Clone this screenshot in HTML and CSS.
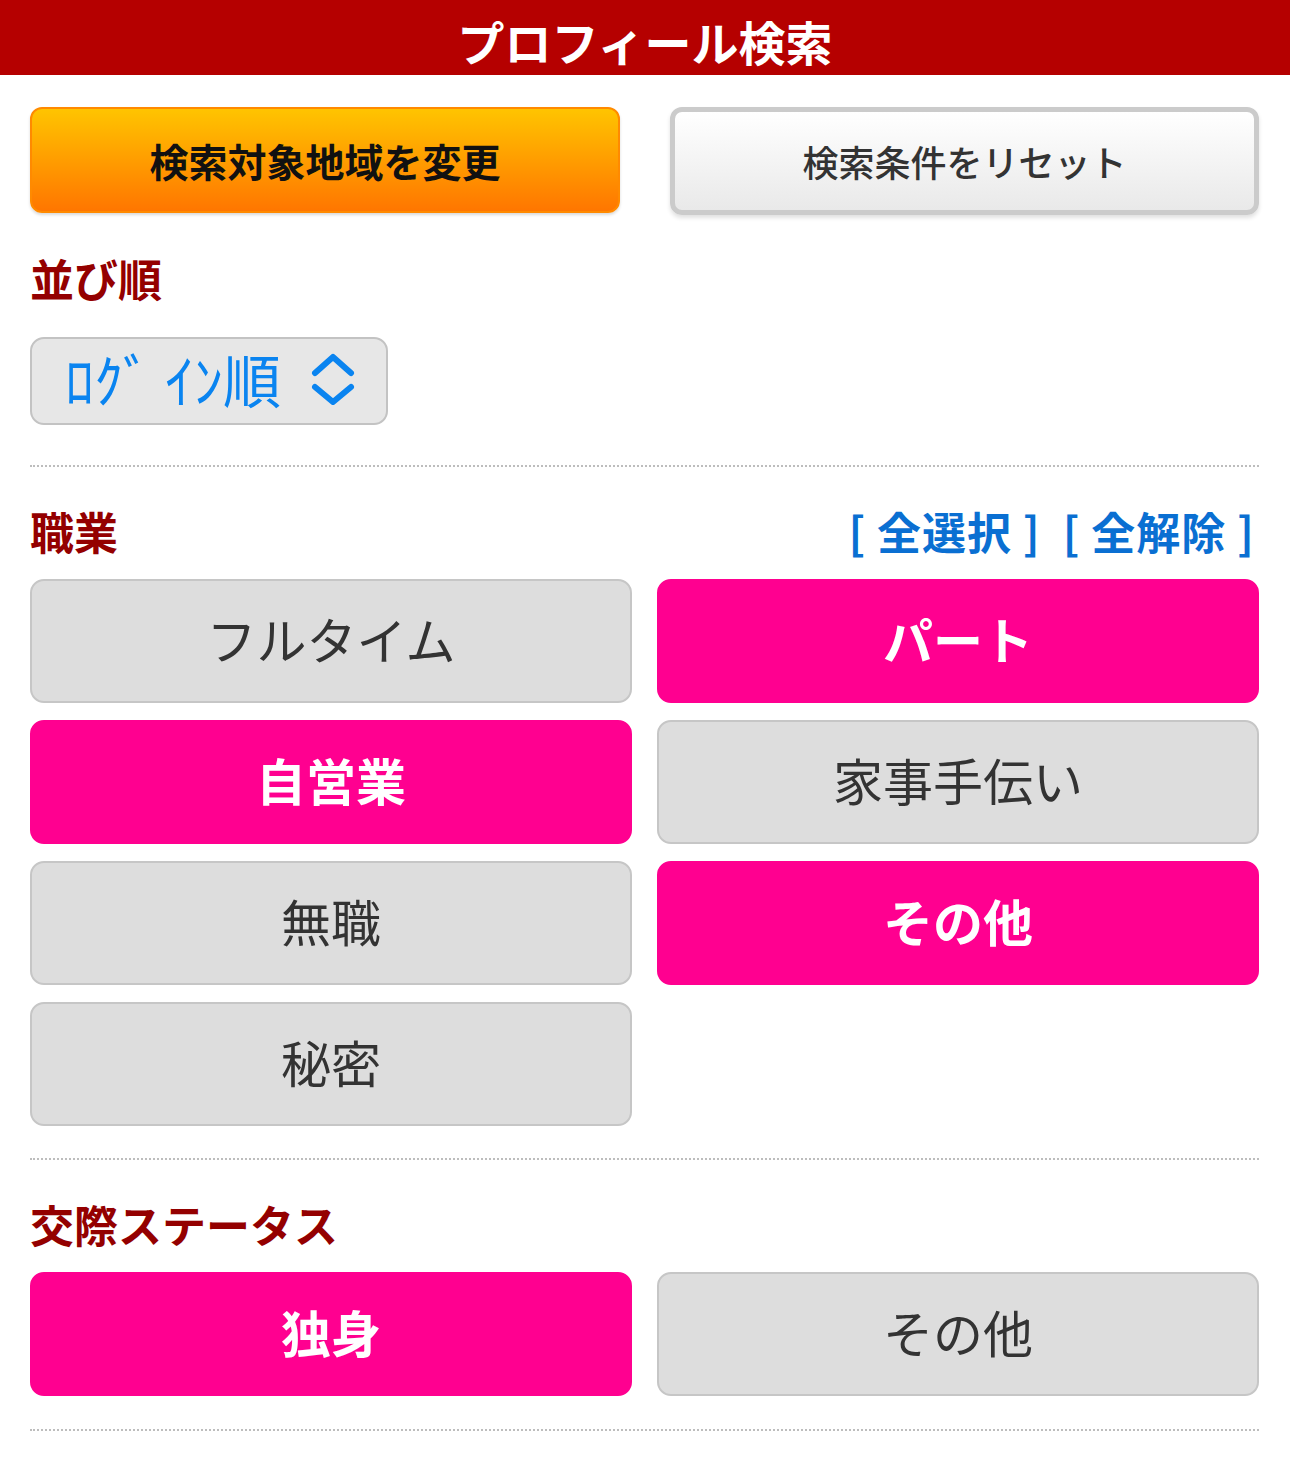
FILE: index.html
```html
<!DOCTYPE html>
<html lang="ja">
<head>
<meta charset="utf-8">
<title>プロフィール検索</title>
<link rel="stylesheet" href="styles.css">
</head>
<body>
<header class="topbar"><h1 class="title">プロフィール検索</h1></header>
<main class="content">
  <div class="actions">
    <button class="btn-area">検索対象地域を変更</button>
    <button class="btn-reset">検索条件をリセット</button>
  </div>

  <section class="section sort">
    <h2 class="heading">並び順</h2>
    <div class="select">
      <span class="select-text">ﾛｸﾞ ｲﾝ順</span>
      <svg class="chevron" viewBox="0 0 44 52" width="44" height="52" aria-hidden="true">
        <polyline points="4,20 22,4 40,20" fill="none" stroke="#0a84f0" stroke-width="6" stroke-linecap="round" stroke-linejoin="round"/>
        <polyline points="4,34 22,49 40,34" fill="none" stroke="#0a84f0" stroke-width="6" stroke-linecap="round" stroke-linejoin="round"/>
      </svg>
    </div>
  </section>

  <div class="divider"></div>

  <section class="section job">
    <div class="heading-row">
      <h2 class="heading">職業</h2>
      <div class="links">
        <a class="link">[&nbsp;全選択&nbsp;]</a>
        <a class="link">[&nbsp;全解除&nbsp;]</a>
      </div>
    </div>
    <div class="options">
      <div class="opt">フルタイム</div>
      <div class="opt on">パート</div>
      <div class="opt on">自営業</div>
      <div class="opt">家事手伝い</div>
      <div class="opt">無職</div>
      <div class="opt on">その他</div>
      <div class="opt">秘密</div>
    </div>
  </section>

  <div class="divider"></div>

  <section class="section status">
    <h2 class="heading">交際ステータス</h2>
    <div class="options">
      <div class="opt on">独身</div>
      <div class="opt">その他</div>
    </div>
  </section>

  <div class="divider"></div>
</main>
</body>
</html>
```

FILE: styles.css
```css
* { box-sizing: border-box; }
html, body { margin: 0; padding: 0; background: #fff; }
body {
  font-family: "Noto Sans CJK JP", "Noto Sans", sans-serif;
  color: #333;
}
.topbar {
  height: 75px;
  background: #b50000;
  display: flex;
  justify-content: center;
  align-items: center;
  padding-top: 5px;
}
.title {
  margin: 0;
  font-size: 47px;
  line-height: 1;
  font-weight: 700;
  color: #fff;
}
.content {
  padding: 0 31px 0 30px;
}
.actions {
  display: grid;
  grid-template-columns: 590px 1fr;
  gap: 50px;
  margin-top: 32px;
  align-items: start;
}
.btn-area, .btn-reset {
  font-family: inherit;
  display: flex;
  align-items: center;
  justify-content: center;
  line-height: 1;
  cursor: pointer;
}
.btn-area {
  height: 106px;
  border: 2px solid #ff8a00;
  border-radius: 12px;
  background: linear-gradient(#ffc400, #ff7600);
  color: #111;
  font-size: 39px;
  font-weight: 700;
  box-shadow: 0 2px 3px rgba(0,0,0,0.15);
}
.btn-reset {
  height: 108px;
  border: 5px solid #cbcbcb;
  border-radius: 12px;
  background: linear-gradient(#ffffff, #e9e9e9);
  color: #333;
  font-size: 36px;
  font-weight: 500;
  box-shadow: 0 3px 4px rgba(0,0,0,0.12);
}
.heading {
  margin: 0;
  font-size: 44px;
  line-height: 1;
  font-weight: 700;
  color: #940000;
}
.sort { padding-top: 41px; }
.select {
  margin-top: 37px;
  width: 358px;
  height: 88px;
  background: #e7e7e7;
  border: 2px solid #c3c3c3;
  border-radius: 14px;
  display: flex;
  align-items: center;
  padding-left: 33px;
}
.select-text {
  font-size: 58px;
  line-height: 1;
  color: #0a84f0;
  font-weight: 400;
  padding-bottom: 6px;
}
.chevron {
  margin-left: 30px;
  margin-bottom: 4px;
}
.divider {
  border-top: 2px dotted #bdbdbd;
  margin-top: 40px;
}
.job { padding-top: 42px; }
.heading-row {
  display: flex;
  justify-content: space-between;
  align-items: center;
}
.links {
  display: flex;
  gap: 22px;
  margin-right: 4px;
}
.link {
  font-size: 44px;
  line-height: 1;
  font-weight: 700;
  color: #0a6fd2;
  letter-spacing: 1px;
}
.options {
  display: grid;
  grid-template-columns: 1fr 1fr;
  column-gap: 25px;
  row-gap: 17px;
  margin-top: 26px;
}
.opt {
  height: 124px;
  border: 2px solid #c6c6c6;
  border-radius: 14px;
  background: #dddddd;
  color: #333;
  font-size: 50px;
  line-height: 1;
  display: flex;
  align-items: center;
  justify-content: center;
  padding-bottom: 6px;
}
.opt.on {
  background: #ff0090;
  border-color: #ff0090;
  color: #fff;
  font-weight: 700;
}
.job + .divider { margin-top: 32px; }
.status { padding-top: 42px; }
.status .options { margin-top: 26px; }
.status + .divider { margin-top: 33px; }
```
